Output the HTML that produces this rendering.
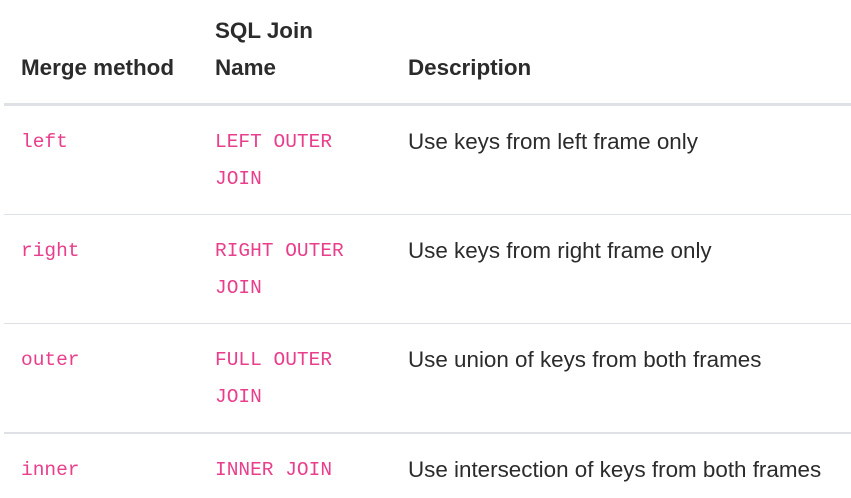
<!DOCTYPE html>
<html><head><style>
body{margin:0;width:851px;height:498px;overflow:hidden;background:#fff;font-family:"Liberation Sans",sans-serif;color:#2b2b2b;font-size:22.4px}
.a{position:absolute;line-height:37px;white-space:nowrap}
.h{font-weight:bold;font-size:22.4px}
.c{font-family:"Liberation Mono",monospace;color:#e83e8c;font-size:19.5px}
.l{position:absolute;left:4px;width:847px;background:#dee2e6}
</style></head><body>
<div class="a h" style="left:21px;top:49px">Merge method</div>
<div class="a h" style="left:215px;top:12px">SQL Join<br>Name</div>
<div class="a h" style="left:408px;top:49px">Description</div>
<div class="l" style="top:103px;height:3px"></div>

<div class="a c" style="left:21px;top:124px">left</div>
<div class="a c" style="left:215px;top:124px">LEFT OUTER<br>JOIN</div>
<div class="a" style="left:408px;top:123px">Use keys from left frame only</div>
<div class="l" style="top:214px;height:1px"></div>

<div class="a c" style="left:21px;top:233px">right</div>
<div class="a c" style="left:215px;top:233px">RIGHT OUTER<br>JOIN</div>
<div class="a" style="left:408px;top:232px">Use keys from right frame only</div>
<div class="l" style="top:323px;height:1px"></div>

<div class="a c" style="left:21px;top:342px">outer</div>
<div class="a c" style="left:215px;top:342px">FULL OUTER<br>JOIN</div>
<div class="a" style="left:408px;top:341px">Use union of keys from both frames</div>
<div class="l" style="top:432px;height:2px"></div>

<div class="a c" style="left:21px;top:452px">inner</div>
<div class="a c" style="left:215px;top:452px">INNER JOIN</div>
<div class="a" style="left:408px;top:451px">Use intersection of keys from both frames</div>
</body></html>
